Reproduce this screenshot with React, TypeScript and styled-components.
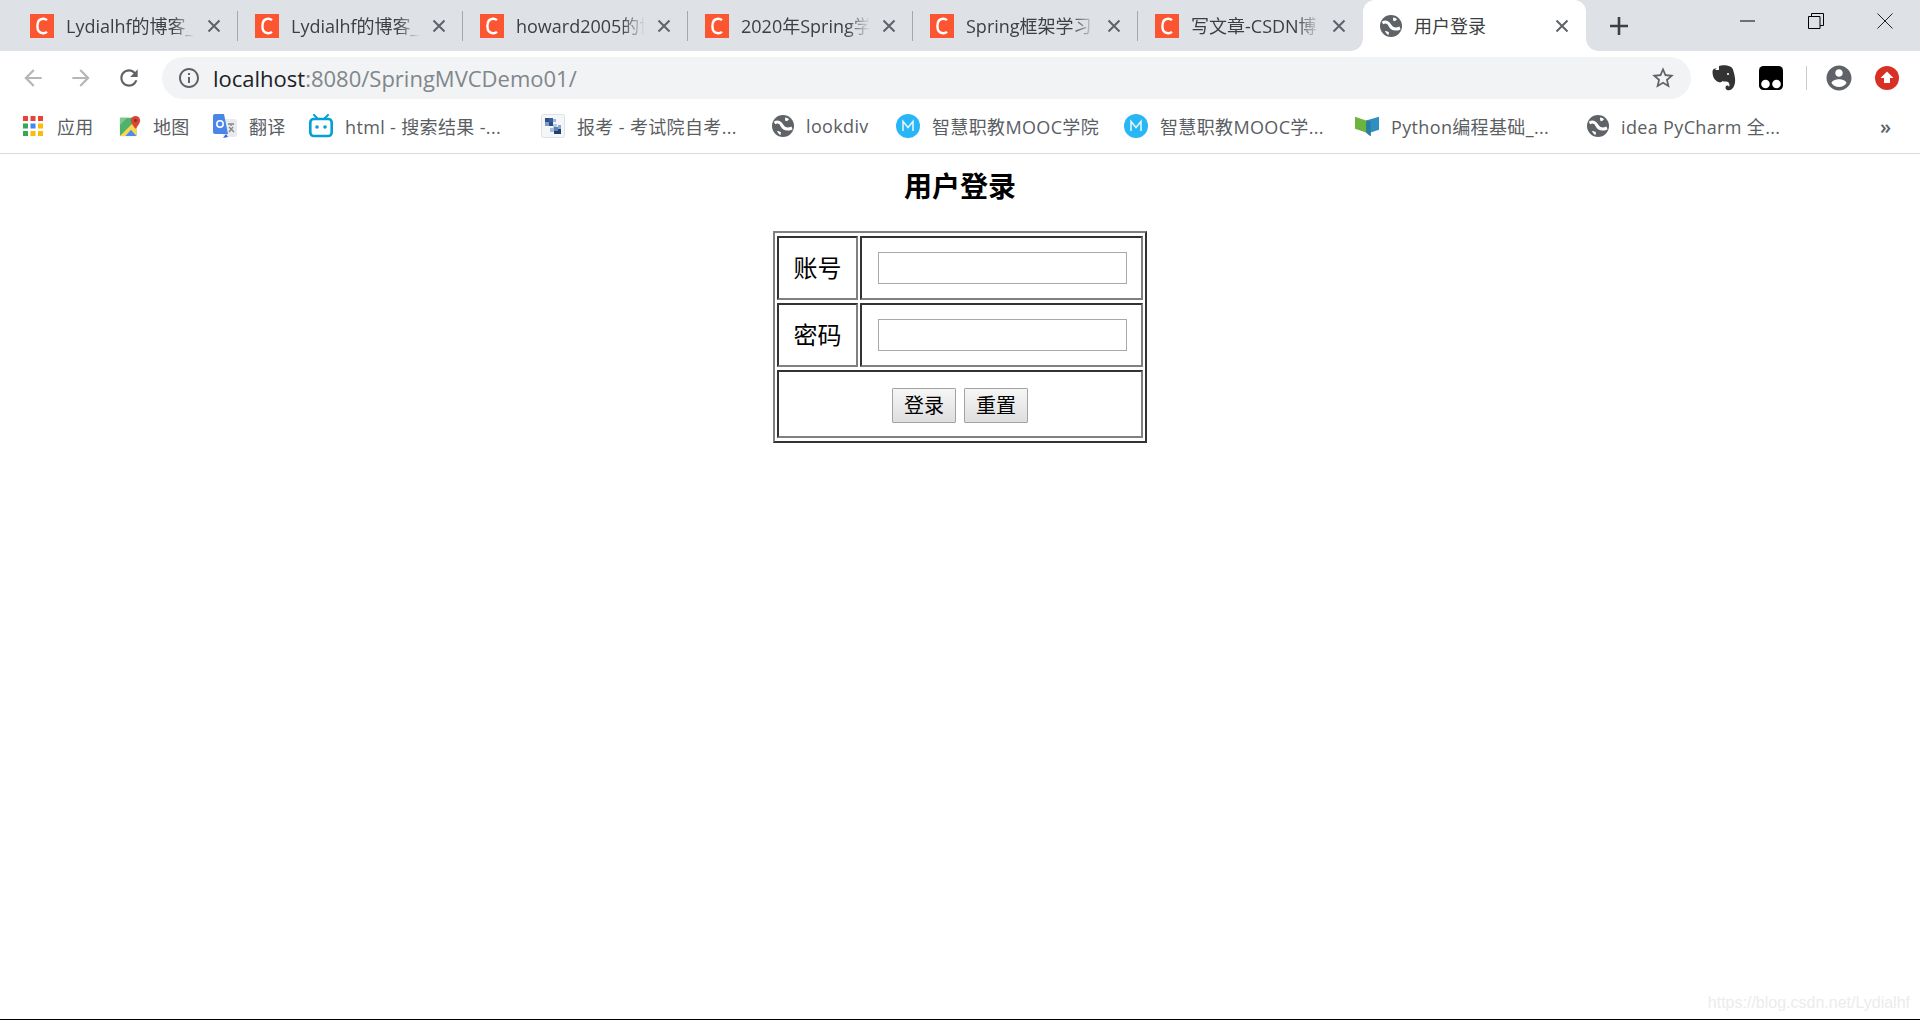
import React from 'react';
import styled, { createGlobalStyle } from 'styled-components';

const GlobalStyle = createGlobalStyle`
  html, body {
    margin: 0;
    height: 100%;
    overflow: hidden;
    background: #fff;
  }
  svg {
    flex-shrink: 0;
  }
`;

const uiFont = `"Open Sans", "Noto Sans CJK SC", sans-serif`;

const Page = styled.div`
  display: flex;
  flex-direction: column;
  height: 100vh;
  font-family: ${uiFont};
`;

const TabStrip = styled.div`
  display: flex;
  height: 51px;
  padding-left: 13px;
  background: #dee1e6;
  flex-shrink: 0;
`;

const Tab = styled.div<{ $active?: boolean; $noDivider?: boolean }>`
  position: relative;
  display: flex;
  align-items: center;
  box-sizing: border-box;
  width: ${(p) => (p.$active ? 223 : 225)}px;
  height: 51px;
  padding: 0 17px;
  gap: 12px;
  background: ${(p) => (p.$active ? '#fff' : 'transparent')};
  border-radius: ${(p) => (p.$active ? '12px 12px 0 0' : '0')};

  &::after {
    content: '';
    display: ${(p) => (p.$active || p.$noDivider ? 'none' : 'block')};
    position: absolute;
    right: 0;
    top: 11px;
    width: 1px;
    height: 30px;
    background: #a5a8ad;
  }
`;

const Flare = styled.span<{ $side: 'left' | 'right' }>`
  position: absolute;
  bottom: 0;
  ${(p) => p.$side}: -12px;
  width: 12px;
  height: 12px;
  background: radial-gradient(
    circle at ${(p) => (p.$side === 'left' ? '0 0' : '100% 0')},
    transparent 11.5px,
    #fff 12px
  );
`;

const TabTitle = styled.span`
  flex: 1;
  min-width: 0;
  overflow: hidden;
  white-space: nowrap;
  font-size: 18px;
  line-height: 24px;
  color: #3c4043;
  -webkit-mask-image: linear-gradient(to right, #000 82%, transparent 100%);
  mask-image: linear-gradient(to right, #000 82%, transparent 100%);
`;

const ActiveTitle = styled(TabTitle)`
  -webkit-mask-image: none;
  mask-image: none;
`;

const NewTab = styled.div`
  display: flex;
  align-items: center;
  justify-content: center;
  width: 24px;
  height: 51px;
  margin-left: 21px;
`;

const WindowControls = styled.div`
  display: flex;
  margin-left: auto;
  padding-right: 1px;
`;

const WindowButton = styled.div`
  display: flex;
  align-items: center;
  justify-content: center;
  width: 68.5px;
  height: 42px;
`;

const Toolbar = styled.div`
  display: flex;
  align-items: center;
  box-sizing: border-box;
  height: 50px;
  padding: 6px 0 2px;
  background: #fff;
  flex-shrink: 0;
`;

const NavGroup = styled.div`
  display: flex;
  align-items: center;
  gap: 22px;
  padding-left: 20px;
  width: 162px;
  box-sizing: border-box;
`;

const Omnibox = styled.div`
  display: flex;
  align-items: center;
  box-sizing: border-box;
  width: 1529px;
  height: 42px;
  padding: 0 15px;
  border-radius: 21px;
  background: #f1f3f4;
`;

const Url = styled.span`
  margin-left: 12px;
  font-size: 22px;
  color: #80868b;
  white-space: nowrap;
`;

const Host = styled.span`
  color: #202124;
`;

const StarSlot = styled.span`
  display: flex;
  margin-left: auto;
`;

const Extensions = styled.div`
  display: flex;
  align-items: center;
  padding-left: 21px;
`;

const ExtensionSlot = styled.div<{ $width: number }>`
  display: flex;
  align-items: center;
  justify-content: center;
  width: ${(p) => p.$width}px;
`;

const Divider = styled.div`
  width: 1px;
  height: 24px;
  background: #c8cacd;
`;

const BookmarkBar = styled.div`
  display: flex;
  align-items: center;
  height: 53px;
  padding: 0 0 2px 23px;
  border-bottom: 1px solid #d9dadc;
  box-sizing: border-box;
  flex-shrink: 0;
`;

const Bookmark = styled.div<{ $width: number }>`
  display: flex;
  align-items: center;
  gap: 12px;
  width: ${(p) => p.$width}px;
  flex-shrink: 0;
  font-size: 18px;
  letter-spacing: 0.35px;
  color: #5a5e63;
  white-space: nowrap;
`;

const MoreBookmarks = styled.span`
  margin-left: auto;
  margin-right: 29px;
  font-size: 20px;
  font-weight: 600;
  color: #5f6368;
`;

const Main = styled.main`
  position: relative;
  flex: 1;
  border-bottom: 1px solid #000;
  font-family: "Noto Sans CJK SC", "Liberation Sans", sans-serif;
  color: #000;
`;

const Title = styled.h3`
  margin: 0;
  padding-top: 11px;
  height: 63px;
  box-sizing: border-box;
  text-align: center;
  font-size: 28px;
  line-height: 40px;
  font-weight: 700;
`;

const LoginTable = styled.table`
  margin: 14px auto 0;
  width: 374px;
  border-collapse: separate;
  border-spacing: 2px 3px;
  border-style: solid;
  border-width: 2px;
  border-color: #808080 #333 #333 #808080;
  box-sizing: border-box;
`;

const Cell = styled.td<{ $label?: boolean; $tall?: boolean }>`
  box-sizing: border-box;
  padding: 0 0 ${(p) => (p.$label ? 3 : 0)}px;
  height: ${(p) => (p.$tall ? 68 : 64)}px;
  width: ${(p) => (p.$label ? '81px' : 'auto')};
  text-align: center;
  font-size: 24px;
  border-style: solid;
  border-width: 2px;
  border-color: #333 #808080 #808080 #333;
`;

const TextInput = styled.input`
  display: block;
  box-sizing: border-box;
  width: 249px;
  height: 32px;
  margin: 0 0 0 16px;
  padding: 0 2px;
  border: 1px solid #a9a9a9;
  background: #fff;
  outline: none;
`;

const ActionButton = styled.button`
  box-sizing: border-box;
  width: 64px;
  height: 35px;
  padding: 0;
  font-family: inherit;
  font-size: 20px;
  line-height: 1;
  color: #000;
  border: 1px solid #a3a3a3;
  border-radius: 1px;
  background: linear-gradient(#f6f6f6, #dedede);

  & + & {
    margin-left: 8px;
  }
`;

const Watermark = styled.div`
  position: absolute;
  right: 10px;
  bottom: 7px;
  font-family: "Liberation Sans", sans-serif;
  font-size: 16px;
  color: #ececec;
`;

const CsdnIcon = () => (
  <svg width="24" height="24" viewBox="0 0 24 24">
    <rect width="24" height="24" fill="#fc5531" />
    <path
      d="M17 6.2c-1.2-1-2.6-1.5-4-1.4-3.6.2-5.6 3.2-5.6 7.2s2 7 5.6 7.2c1.4.1 2.8-.4 4-1.4"
      fill="none"
      stroke="#fff"
      strokeWidth="2.4"
    />
  </svg>
);

const GlobeIcon = () => (
  <svg width="22" height="22" viewBox="0 0 22 22">
    <circle cx="11" cy="11" r="11" fill="#5f6368" />
    <path
      d="M2.5 8C6 6 8.500 7.500 10 10.500 11.500 13.500 15 15 20 13"
      fill="none"
      stroke="#fff"
      strokeWidth="3"
    />
    <path d="M13 2.500c1.500.2 3 .8 4 1.800-.8 1.200-2 2-3.300 2-.6-1.200-.9-2.500-.7-3.800z" fill="#fff" />
    <path d="M5 16c1.500 0 3 .5 4 1.500l-.5 2.500C7 19.500 6 18 5 16z" fill="#fff" />
  </svg>
);

const CloseIcon = () => (
  <svg width="14" height="14" viewBox="0 0 14 14">
    <path d="M1.500 1.500l11 11M12.500 1.500l-11 11" stroke="#5f6368" strokeWidth="2" />
  </svg>
);

const MaterialIcon = ({ d, color, size = 26 }: { d: string; color: string; size?: number }) => (
  <svg width={size} height={size} viewBox="0 0 24 24">
    <path d={d} fill={color} />
  </svg>
);

const AppsIcon = () => {
  const colors = ['#ea4335', '#ea4335', '#ea4335', '#34a853', '#4285f4', '#fbbc04', '#34a853', '#fbbc04', '#fbbc04'];
  return (
    <svg width="22" height="20" viewBox="0 0 22 20">
      {colors.map((c, i) => (
        <rect key={i} x={(i % 3) * 7.5} y={Math.floor(i / 3) * 7.5} width="5" height="5" fill={c} />
      ))}
    </svg>
  );
};

const MapsIcon = () => (
  <svg width="22" height="24" viewBox="0 0 24 24">
    <rect x="1" y="3" width="18" height="20" fill="#4db36a" />
    <path d="M1 23l18-18v18z" fill="#fdd64f" />
    <path d="M7 23l6-7 6 7z" fill="#4a8cf0" />
    <path d="M1 3h8L1 11z" fill="#7ec68e" />
    <path d="M18 1a5 5 0 0 1 5 5c0 3.500-5 9-5 9s-5-5.500-5-9a5 5 0 0 1 5-5z" fill="#db4437" />
    <circle cx="18" cy="6" r="1.600" fill="#8e2a22" />
  </svg>
);

const TranslateIcon = () => (
  <svg width="24" height="24" viewBox="0 0 24 24">
    <rect x="10" y="5" width="14" height="18" rx="2" fill="#e8eaed" />
    <path d="M15 10h6M18 10v2M16 18l4-5M16 13l5 5" stroke="#80868b" strokeWidth="1.300" fill="none" />
    <path d="M2 0h9l4 20H2a2 2 0 0 1-2-2V2a2 2 0 0 1 2-2z" fill="#4a86e8" />
    <circle cx="7" cy="10" r="3.200" fill="none" stroke="#fff" strokeWidth="1.500" />
    <path d="M13 20l-3 4 5-1z" fill="#3367d6" />
  </svg>
);

const BilibiliIcon = () => (
  <svg width="24" height="24" viewBox="0 0 24 24">
    <path d="M5 1l4 4M19 1l-4 4" stroke="#00a1d6" strokeWidth="2" strokeLinecap="round" />
    <rect x="1.300" y="5" width="21.400" height="17" rx="3.500" fill="none" stroke="#00a1d6" strokeWidth="2.600" />
    <circle cx="8" cy="13" r="1.800" fill="#00a1d6" />
    <circle cx="16" cy="13" r="1.800" fill="#00a1d6" />
  </svg>
);

const ExamIcon = () => (
  <svg width="24" height="24" viewBox="0 0 24 24">
    <rect x="0.500" y="0.500" width="23" height="23" rx="2" fill="#f5f6f8" stroke="#dfe1e4" />
    <rect x="4" y="4" width="4" height="4" fill="#2d4f87" />
    <rect x="8" y="4" width="4" height="4" fill="#3d5f97" />
    <rect x="12" y="5" width="3" height="3" fill="#9db4d4" />
    <rect x="4" y="8" width="4" height="4" fill="#7f9bc4" />
    <rect x="8" y="8" width="4" height="4" fill="#2d4f87" />
    <rect x="12" y="10" width="4" height="4" fill="#b6c8e0" />
    <rect x="9" y="14" width="4" height="4" fill="#a8bcd8" />
    <rect x="13" y="13" width="4" height="4" fill="#5f82b5" />
    <rect x="17" y="11" width="3" height="4" fill="#8ba7ce" />
    <rect x="13" y="17" width="4" height="3" fill="#20406f" />
    <rect x="17" y="15" width="3" height="5" fill="#20406f" />
  </svg>
);

const MoocIcon = () => (
  <svg width="24" height="24" viewBox="0 0 24 24">
    <circle cx="12" cy="12" r="12" fill="#29b6f6" />
    <path d="M7 17V7.500l5 6 5-6V17" fill="none" stroke="#e1f5fe" strokeWidth="1.600" />
  </svg>
);

const PythonIcon = () => (
  <svg width="24" height="24" viewBox="0 0 26 24">
    <path d="M0 2l12 4v13L0 15z" fill="#6db33f" />
    <path d="M12 6l14-4v14l-9 3v4l-5-4z" fill="#2f8fc0" />
    <path d="M12 6l5 1v16l-5-4z" fill="#2b7f9e" />
  </svg>
);

const EvernoteIcon = () => (
  <svg width="24" height="26" viewBox="0 0 24 26">
    <path
      d="M7 1c3-1 9-1 12 1 2 1 2 3 3 6 1 4 2 9 0 13-1 3-4 5-7 4-2-1-2-4 0-4.500 1-.2 2 .5 2 1.500 1-2 .5-4-1-5-2-1-4 0-5.500-1-1 2-4 1.500-6 0-3-2-4-6-4-9 0-2 1-3.500 3-3.500h3z"
      fill="#333"
    />
    <circle cx="16" cy="9" r="1.100" fill="#fff" />
    <path d="M7 1v4H3z" fill="#fff" />
  </svg>
);

const TampermonkeyIcon = () => (
  <svg width="24" height="24" viewBox="0 0 24 24">
    <rect width="24" height="24" rx="4.500" fill="#000" />
    <circle cx="6.500" cy="18" r="4.300" fill="#fff" />
    <circle cx="17.500" cy="18" r="4.300" fill="#fff" />
  </svg>
);

const UploadBadge = () => (
  <svg width="24" height="24" viewBox="0 0 24 24">
    <circle cx="12" cy="12" r="12" fill="#d93025" />
    <path d="M12 5.500l6.500 6.500h-3.500v5H9v-5H5.500z" fill="#fff" />
  </svg>
);

const paths = {
  back: 'M20 11H7.830l5.590-5.590L12 4l-8 8 8 8 1.410-1.410L7.830 13H20v-2z',
  forward: 'M12 4l-1.410 1.410L16.170 11H4v2h12.170l-5.580 5.590L12 20l8-8z',
  reload:
    'M17.650 6.350C16.200 4.900 14.210 4 12 4c-4.420 0-7.990 3.580-7.990 8s3.570 8 7.990 8c3.730 0 6.840-2.550 7.730-6h-2.080c-.820 2.330-3.040 4-5.650 4-3.310 0-6-2.690-6-6s2.690-6 6-6c1.660 0 3.140.690 4.220 1.780L13 11h7V4l-2.350 2.350z',
  info: 'M11 7h2v2h-2zm0 4h2v6h-2zm1-9C6.480 2 2 6.480 2 12s4.480 10 10 10 10-4.480 10-10S17.520 2 12 2zm0 18c-4.410 0-8-3.590-8-8s3.590-8 8-8 8 3.590 8 8-3.590 8-8 8z',
  star: 'M22 9.240l-7.190-.620L12 2 9.190 8.630 2 9.240l5.460 4.730L5.820 21 12 17.270 18.180 21l-1.630-7.030L22 9.240zM12 15.400l-3.760 2.270 1-4.280-3.320-2.880 4.380-.380L12 6.100l1.710 4.040 4.380.380-3.320 2.880 1 4.280L12 15.400z',
  account:
    'M12 2C6.480 2 2 6.480 2 12s4.480 10 10 10 10-4.480 10-10S17.520 2 12 2zm0 3c1.660 0 3 1.340 3 3s-1.340 3-3 3-3-1.340-3-3 1.340-3 3-3zm0 14.200c-2.500 0-4.710-1.280-6-3.220.030-1.990 4-3.080 6-3.080 1.990 0 5.970 1.090 6 3.080-1.290 1.940-3.500 3.220-6 3.220z',
};

const tabs = ['Lydialhf的博客_', 'Lydialhf的博客_', 'howard2005的博', '2020年Spring学', 'Spring框架学习', '写文章-CSDN博'];

const bookmarks: { icon: React.ReactNode; label: string; width: number }[] = [
  { icon: <AppsIcon />, label: '应用', width: 96 },
  { icon: <MapsIcon />, label: '地图', width: 94 },
  { icon: <TranslateIcon />, label: '翻译', width: 96 },
  { icon: <BilibiliIcon />, label: 'html - 搜索结果 -...', width: 232 },
  { icon: <ExamIcon />, label: '报考 - 考试院自考...', width: 231 },
  { icon: <GlobeIcon />, label: 'lookdiv', width: 124 },
  { icon: <MoocIcon />, label: '智慧职教MOOC学院', width: 228 },
  { icon: <MoocIcon />, label: '智慧职教MOOC学...', width: 231 },
  { icon: <PythonIcon />, label: 'Python编程基础_...', width: 232 },
  { icon: <GlobeIcon />, label: 'idea PyCharm 全...', width: 200 },
];

const App = () => (
  <Page>
    <GlobalStyle />
    <TabStrip>
      {tabs.map((title, i) => (
        <Tab key={i} $noDivider={i === tabs.length - 1}>
          <CsdnIcon />
          <TabTitle>{title}</TabTitle>
          <CloseIcon />
        </Tab>
      ))}
      <Tab $active>
        <Flare $side="left" />
        <GlobeIcon />
        <ActiveTitle>用户登录</ActiveTitle>
        <CloseIcon />
        <Flare $side="right" />
      </Tab>
      <NewTab>
        <svg width="20" height="20" viewBox="0 0 20 20">
          <path d="M10 1v18M1 10h18" stroke="#3c4043" strokeWidth="2.600" />
        </svg>
      </NewTab>
      <WindowControls>
        <WindowButton>
          <svg width="16" height="16" viewBox="0 0 16 16">
            <path d="M0 8h15" stroke="#000" strokeWidth="1" />
          </svg>
        </WindowButton>
        <WindowButton>
          <svg width="16" height="16" viewBox="0 0 16 16">
            <path d="M.5 3.500h11.500v12H.5zM3.500 3.500V.5h12v12H12" fill="none" stroke="#000" strokeWidth="1" />
          </svg>
        </WindowButton>
        <WindowButton>
          <svg width="16" height="16" viewBox="0 0 16 16">
            <path d="M.5.5l15 15M15.500.5l-15 15" stroke="#222" strokeWidth="1" />
          </svg>
        </WindowButton>
      </WindowControls>
    </TabStrip>

    <Toolbar>
      <NavGroup>
        <MaterialIcon d={paths.back} color="#b4b7ba" size={26} />
        <MaterialIcon d={paths.forward} color="#b4b7ba" size={26} />
        <MaterialIcon d={paths.reload} color="#5f6368" size={26} />
      </NavGroup>
      <Omnibox>
        <MaterialIcon d={paths.info} color="#5f6368" size={24} />
        <Url>
          <Host>localhost</Host>:8080/SpringMVCDemo01/
        </Url>
        <StarSlot>
          <MaterialIcon d={paths.star} color="#5f6368" size={26} />
        </StarSlot>
      </Omnibox>
      <Extensions>
        <ExtensionSlot $width={24}>
          <EvernoteIcon />
        </ExtensionSlot>
        <ExtensionSlot $width={70}>
          <TampermonkeyIcon />
        </ExtensionSlot>
        <Divider />
        <ExtensionSlot $width={64}>
          <MaterialIcon d={paths.account} color="#5f6368" size={30} />
        </ExtensionSlot>
        <ExtensionSlot $width={32}>
          <UploadBadge />
        </ExtensionSlot>
      </Extensions>
    </Toolbar>

    <BookmarkBar>
      {bookmarks.map((b, i) => (
        <Bookmark key={i} $width={b.width}>
          {b.icon}
          {b.label}
        </Bookmark>
      ))}
      <MoreBookmarks>»</MoreBookmarks>
    </BookmarkBar>

    <Main>
      <Title>用户登录</Title>
      <LoginTable>
        <tbody>
          <tr>
            <Cell $label>账号</Cell>
            <Cell>
              <TextInput type="text" />
            </Cell>
          </tr>
          <tr>
            <Cell $label>密码</Cell>
            <Cell>
              <TextInput type="password" />
            </Cell>
          </tr>
          <tr>
            <Cell colSpan={2} $tall>
              <ActionButton type="submit">登录</ActionButton>
              <ActionButton type="reset">重置</ActionButton>
            </Cell>
          </tr>
        </tbody>
      </LoginTable>
      <Watermark>https://blog.csdn.net/Lydialhf</Watermark>
    </Main>
  </Page>
);

export default App;
